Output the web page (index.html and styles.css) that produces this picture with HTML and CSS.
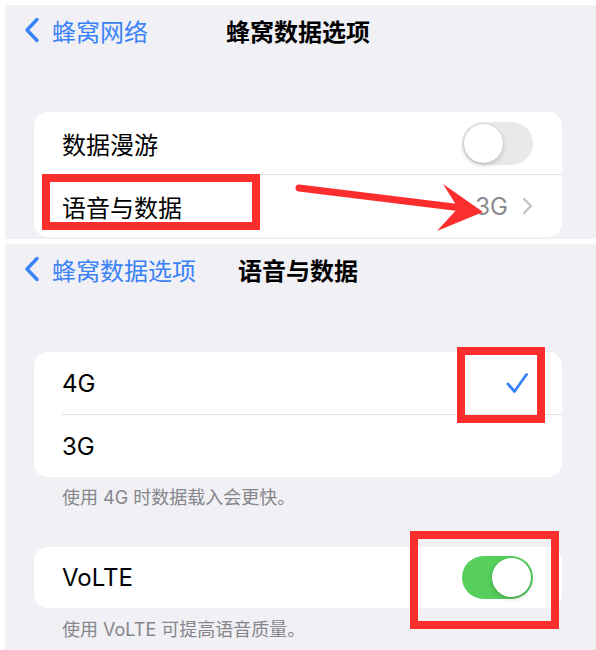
FILE: index.html
```html
<!DOCTYPE html>
<html lang="zh-CN">
<head>
<meta charset="utf-8">
<title>语音与数据</title>
<link rel="stylesheet" href="styles.css">
</head>
<body>
<div class="page">
  <section class="panel p1">
    <header class="nav">
      <div class="back">
        <svg class="back-chev" viewBox="0 0 16 26" width="16" height="26"><path d="M13 2.5 L3 13 L13 23.5" fill="none" stroke="#3a82f7" stroke-width="3.4" stroke-linecap="round" stroke-linejoin="round"/></svg>
        <span>蜂窝网络</span>
      </div>
      <h1 class="title">蜂窝数据选项</h1>
      <span></span>
    </header>
    <div class="card">
      <div class="row">
        <span class="label">数据漫游</span>
        <span class="toggle"><span class="knob"></span></span>
      </div>
      <div class="sep"></div>
      <div class="row">
        <span class="label">语音与数据</span>
        <span class="detail"><span class="value">3G</span>
          <svg viewBox="0 0 11 18" width="11" height="18"><path d="M2 2 L9 9 L2 16" fill="none" stroke="#c4c4c7" stroke-width="2.4" stroke-linecap="round" stroke-linejoin="round"/></svg>
        </span>
      </div>
    </div>
  </section>

  <section class="panel p2">
    <header class="nav">
      <div class="back">
        <svg class="back-chev" viewBox="0 0 16 26" width="16" height="26"><path d="M13 2.5 L3 13 L13 23.5" fill="none" stroke="#3a82f7" stroke-width="3.4" stroke-linecap="round" stroke-linejoin="round"/></svg>
        <span>蜂窝数据选项</span>
      </div>
      <h1 class="title">语音与数据</h1>
      <span></span>
    </header>
    <div class="card c2">
      <div class="row">
        <span class="label">4G</span>
        <svg class="check" viewBox="0 0 22 22" width="22" height="22"><path d="M2 12 L8.5 19.5 L20.5 2.5" fill="none" stroke="#3a82f7" stroke-width="2.8" stroke-linecap="round" stroke-linejoin="round"/></svg>
      </div>
      <div class="sep"></div>
      <div class="row">
        <span class="label">3G</span>
      </div>
    </div>
    <p class="note">使用 4G 时数据载入会更快。</p>
    <div class="card c3">
      <div class="row short">
        <span class="label">VoLTE</span>
        <span class="toggle on"><span class="knob"></span></span>
      </div>
    </div>
    <p class="note n2">使用 VoLTE 可提高语音质量。</p>
  </section>

  <div class="mark m1"></div>
  <div class="mark m2"></div>
  <div class="mark m3"></div>
  <svg class="arrow" viewBox="0 0 596 650" width="596" height="650">
    <line x1="299" y1="188" x2="462" y2="208" stroke="#fb2d2d" stroke-width="7" stroke-linecap="round"/>
    <polygon points="443,184 483,212 437,231 458,208" fill="#fb2d2d"/>
  </svg>
</div>
</body>
</html>
```

FILE: styles.css
```css
html, body {
  margin: 0;
  background: #ffffff;
}

body {
  font-family: Inter, "Noto Sans CJK SC", sans-serif;
}

.page {
  position: relative;
  width: 596px;
  height: 650px;
  overflow: hidden;
  box-sizing: border-box;
  padding: 5px 0 0 5px;
  display: flex;
  flex-direction: column;
  gap: 5px;
}

.panel {
  background: #f0f0f5;
  overflow: hidden;
}

.p1 {
  height: 234px;
  flex: none;
}

.p2 {
  flex: 1;
}

.nav {
  height: 50px;
  display: grid;
  grid-template-columns: 1fr auto 1fr;
  align-items: center;
  padding: 0 24px 0 19px;
}

.back {
  display: flex;
  align-items: center;
  gap: 12px;
  color: #3a82f7;
  font-size: 24px;
}

.back-chev {
  flex: none;
}

.title {
  margin: 0;
  font-size: 24px;
  font-weight: 700;
  color: #000;
}

.card {
  margin: 57px 34px 0 29px;
  background: #ffffff;
  border-radius: 14px;
  overflow: hidden;
}

.c2 {
  margin-top: 58px;
}

.c3 {
  margin-top: 37px;
}

.row {
  height: 62px;
  display: flex;
  align-items: center;
  justify-content: space-between;
  padding: 0 29px 0 28px;
}

.row.short {
  height: 61px;
}

.sep {
  height: 1px;
  background: #e3e3e7;
  margin-left: 28px;
}

.label {
  font-size: 24px;
  color: #000;
}

.toggle {
  width: 71px;
  height: 43px;
  box-sizing: border-box;
  border-radius: 22px;
  background: #e9e9eb;
  display: flex;
  align-items: center;
  padding: 2px;
}

.toggle.on {
  background: #56cf5c;
  justify-content: flex-end;
}

.knob {
  width: 39px;
  height: 39px;
  border-radius: 50%;
  background: #ffffff;
  box-shadow: 0 2px 5px rgba(0, 0, 0, 0.2), 0 0 1px rgba(0, 0, 0, 0.15);
}

.detail {
  display: flex;
  align-items: center;
  gap: 14px;
  color: #8a8a8e;
  font-size: 24px;
}

.check {
  margin-right: 5px;
}

.note {
  margin: 0;
  padding: 9px 0 0 57px;
  font-size: 18px;
  line-height: 24px;
  color: #86868b;
}

.note.n2 {
  padding-top: 10px;
}

.mark {
  position: absolute;
  box-sizing: border-box;
  border: 8px solid #fb2d2d;
}

.m1 {
  left: 42px;
  top: 174px;
  width: 218px;
  height: 56px;
}

.m2 {
  left: 457px;
  top: 347px;
  width: 88px;
  height: 76px;
}

.m3 {
  left: 410px;
  top: 531px;
  width: 149px;
  height: 98px;
}

.arrow {
  position: absolute;
  left: 0;
  top: 0;
  pointer-events: none;
}
```
